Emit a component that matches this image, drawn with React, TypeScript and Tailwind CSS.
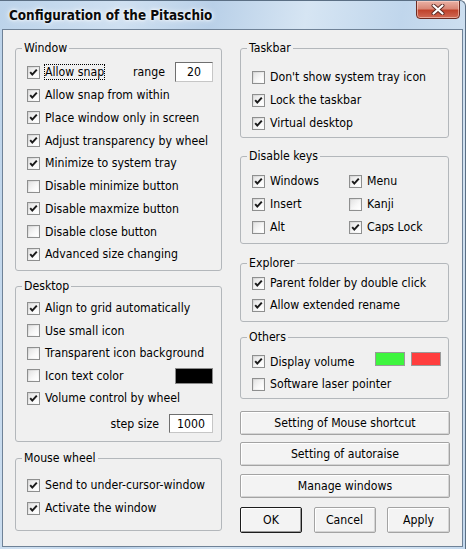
import React from 'react';

const FONT = "font-['DejaVu_Sans_Condensed','Liberation_Sans',sans-serif]";

function Check({ on }: { on?: boolean }) {
  return (
    <span className="relative flex h-[13px] w-[13px] shrink-0 border border-[#8e8f8f] bg-[linear-gradient(135deg,#d2d2d2_0%,#ededed_55%,#ffffff_100%)]">
      <span className="m-[1px] flex-1 bg-[linear-gradient(135deg,#e4e4e4_0%,#f8f8f8_60%,#ffffff_100%)]" />
      {on && (
        <svg className="absolute left-0 top-0" width="11" height="11" viewBox="0 0 11 11">
          <path d="M2.2 5.2 L4.3 7.6 L8.8 2.6" fill="none" stroke="#1b1b1b" strokeWidth="2" />
        </svg>
      )}
    </span>
  );
}

function Row({
  label,
  on,
  h,
  focus,
  children,
}: {
  label: string;
  on?: boolean;
  h: string;
  focus?: boolean;
  children?: React.ReactNode;
}) {
  return (
    <div className={`flex items-center gap-[5px] ${h}`}>
      <Check on={on} />
      {focus ? (
        <span className="-ml-[1px] border border-dotted border-black leading-[14px]">{label}</span>
      ) : (
        <span className="leading-[14px] whitespace-nowrap">{label}</span>
      )}
      {children}
    </div>
  );
}

function Group({
  title,
  className,
  children,
}: {
  title: string;
  className: string;
  children: React.ReactNode;
}) {
  return (
    <div className={`relative rounded-[3px] border border-[#b3b7bb] ${className}`}>
      <span className="absolute -top-[8px] left-[6px] bg-[#f0f0f0] px-[2px] leading-[15px]">{title}</span>
      {children}
    </div>
  );
}

function Edit({ value, w }: { value: string; w: string }) {
  return (
    <span
      className={`flex h-[19px] items-center justify-center border border-[#6f6f6f] border-b-[#c6c6c6] border-r-[#c6c6c6] bg-white leading-[14px] ${w}`}
    >
      {value}
    </span>
  );
}

function Button({ label, className, def }: { label: string; className: string; def?: boolean }) {
  return (
    <div
      className={`flex items-center justify-center rounded-[2px] border bg-[#f3f3f3] leading-[14px] ${
        def
          ? 'border-[#1c1c1c] shadow-[inset_1px_1px_0_#ffffff,inset_-1px_-1px_0_#9a9a9a]'
          : 'border-[#a3a3a3] shadow-[inset_1px_1px_0_#ffffff,inset_-1px_-1px_0_#d4d4d4]'
      } ${className}`}
    >
      {label}
    </div>
  );
}

export default function App() {
  return (
    <div
      className={`${FONT} flex h-[549px] w-[466px] flex-col overflow-hidden rounded-tr-[6px] border-r border-t border-[#5b6f84] bg-[linear-gradient(100deg,#bcd3ea_0%,#cfe0f1_22%,#b9d0e8_38%,#d6e5f3_55%,#c0d6ec_72%,#d2e2f1_88%,#c4d9ee_100%)] text-[12.2px] text-black`}
    >
      <div className="flex h-[27px] shrink-0 items-start justify-between">
        <span className="ml-[9px] mt-[6px] text-[13.4px] font-bold leading-[17px] text-[#0b0b0b] [text-shadow:0_0_6px_#ffffff,0_0_3px_#ffffff]">
          Configuration of the Pitaschio
        </span>
        <div className="mr-[5px] mt-[-1px] flex h-[19px] w-[44px] items-center justify-center rounded-b-[4px] border border-[#6d2b21] bg-[linear-gradient(180deg,#eab1a5_0%,#d98877_45%,#c0432c_55%,#d06a55_100%)] shadow-[inset_0_0_0_1px_rgba(255,220,210,0.55)]">
          <svg width="14" height="11" viewBox="0 0 14 11">
            <path d="M2.5 1.5 L11.5 9.5 M11.5 1.5 L2.5 9.5" stroke="#5a2a24" strokeWidth="4" strokeLinecap="round" />
            <path d="M2.5 1.5 L11.5 9.5 M11.5 1.5 L2.5 9.5" stroke="#ffffff" strokeWidth="2.2" strokeLinecap="round" />
          </svg>
        </div>
      </div>
      <div className="mb-[2px] ml-[2px] mr-[2px] mt-[1px] flex flex-1 gap-[18px] border border-[#6f8297] bg-[#f0f0f0] pl-[12px] pt-[18px]">
        {/* Left column */}
        <div className="flex w-[207px] flex-col">
          <Group title="Window" className="pb-[4px] pl-[11px] pr-[8px] pt-[12px]">
            <Row label="Allow snap" on h="h-[22.75px]" focus>
              <span className="ml-auto leading-[14px]">range</span>
              <span className="ml-[5px] flex h-[20px] w-[38px] items-center justify-center border border-[#6f6f6f] border-b-[#c6c6c6] border-r-[#c6c6c6] bg-white">
                20
              </span>
            </Row>
            <Row label="Allow snap from within" on h="h-[22.75px]" />
            <Row label="Place window only in screen" on h="h-[22.75px]" />
            <Row label="Adjust transparency by wheel" on h="h-[22.75px]" />
            <Row label="Minimize to system tray" on h="h-[22.75px]" />
            <Row label="Disable minimize button" h="h-[22.75px]" />
            <Row label="Disable maxmize button" on h="h-[22.75px]" />
            <Row label="Disable close button" h="h-[22.75px]" />
            <Row label="Advanced size changing" on h="h-[22.75px]" />
          </Group>
          <Group title="Desktop" className="mt-[15px] pb-[8px] pl-[11px] pr-[8px] pt-[10px]">
            <Row label="Align to grid automatically" on h="h-[22.5px]" />
            <Row label="Use small icon" h="h-[22.5px]" />
            <Row label="Transparent icon background" h="h-[22.5px]" />
            <Row label="Icon text color" h="h-[22.5px]">
              <span className="ml-auto h-[16px] w-[38px] border border-[#8a8a8a] bg-black" />
            </Row>
            <Row label="Volume control by wheel" on h="h-[22.5px]" />
            <div className="mt-[5px] flex h-[19px] items-center justify-end gap-[10px]">
              <span className="leading-[14px]">step size</span>
              <Edit value="1000" w="w-[44px]" />
            </div>
          </Group>
          <Group title="Mouse wheel" className="mt-[16px] pb-[10.5px] pl-[11px] pr-[8px] pt-[14.5px]">
            <Row label="Send to under-cursor-window" on h="h-[23px]" />
            <Row label="Activate the window" on h="h-[23px]" />
          </Group>
        </div>
        {/* Right column */}
        <div className="flex w-[210px] flex-col">
          <Group title="Taskbar" className="w-[209px] pb-[2.5px] pl-[11px] pr-[7px] pt-[16.5px]">
            <Row label="Don't show system tray icon" h="h-[23px]" />
            <Row label="Lock the taskbar" on h="h-[23px]" />
            <Row label="Virtual desktop" on h="h-[23px]" />
          </Group>
          <Group title="Disable keys" className="mt-[18px] w-[209px] pb-[4.5px] pl-[11px] pr-[7px] pt-[12.5px]">
            <div className="grid grid-cols-[97px_1fr]">
              <Row label="Windows" on h="h-[23px]" />
              <Row label="Menu" on h="h-[23px]" />
              <Row label="Insert" on h="h-[23px]" />
              <Row label="Kanji" h="h-[23px]" />
              <Row label="Alt" h="h-[23px]" />
              <Row label="Caps Lock" on h="h-[23px]" />
            </div>
          </Group>
          <Group title="Explorer" className="mt-[19px] w-[209px] pb-[5px] pl-[11px] pr-[7px] pt-[8px]">
            <Row label="Parent folder by double click" on h="h-[22px]" />
            <Row label="Allow extended rename" on h="h-[22px]" />
          </Group>
          <Group title="Others" className="mt-[15px] w-[209px] pb-[2.3px] pl-[11px] pr-[7px] pt-[12.3px]">
            <Row label="Display volume" on h="h-[22.7px]">
              <div className="ml-auto mt-[2px] flex gap-[6px] self-start">
                <span className="h-[14px] w-[30px] border border-[#9a9a9a] bg-[#3ef53e]" />
                <span className="h-[14px] w-[30px] border border-[#9a9a9a] bg-[#ff3e3e]" />
              </div>
            </Row>
            <Row label="Software laser pointer" h="h-[22.7px]" />
          </Group>
          <Button label="Setting of Mouse shortcut" className="mt-[12px] h-[24px] w-[210px]" />
          <Button label="Setting of autoraise" className="mt-[7px] h-[24px] w-[210px]" />
          <Button label="Manage windows" className="mt-[8px] h-[24px] w-[210px]" />
          <div className="mt-[9px] flex justify-between">
            <Button label="OK" def className="h-[26px] w-[62px]" />
            <Button label="Cancel" className="h-[26px] w-[62px]" />
            <Button label="Apply" className="h-[26px] w-[63px]" />
          </div>
        </div>
      </div>
    </div>
  );
}
